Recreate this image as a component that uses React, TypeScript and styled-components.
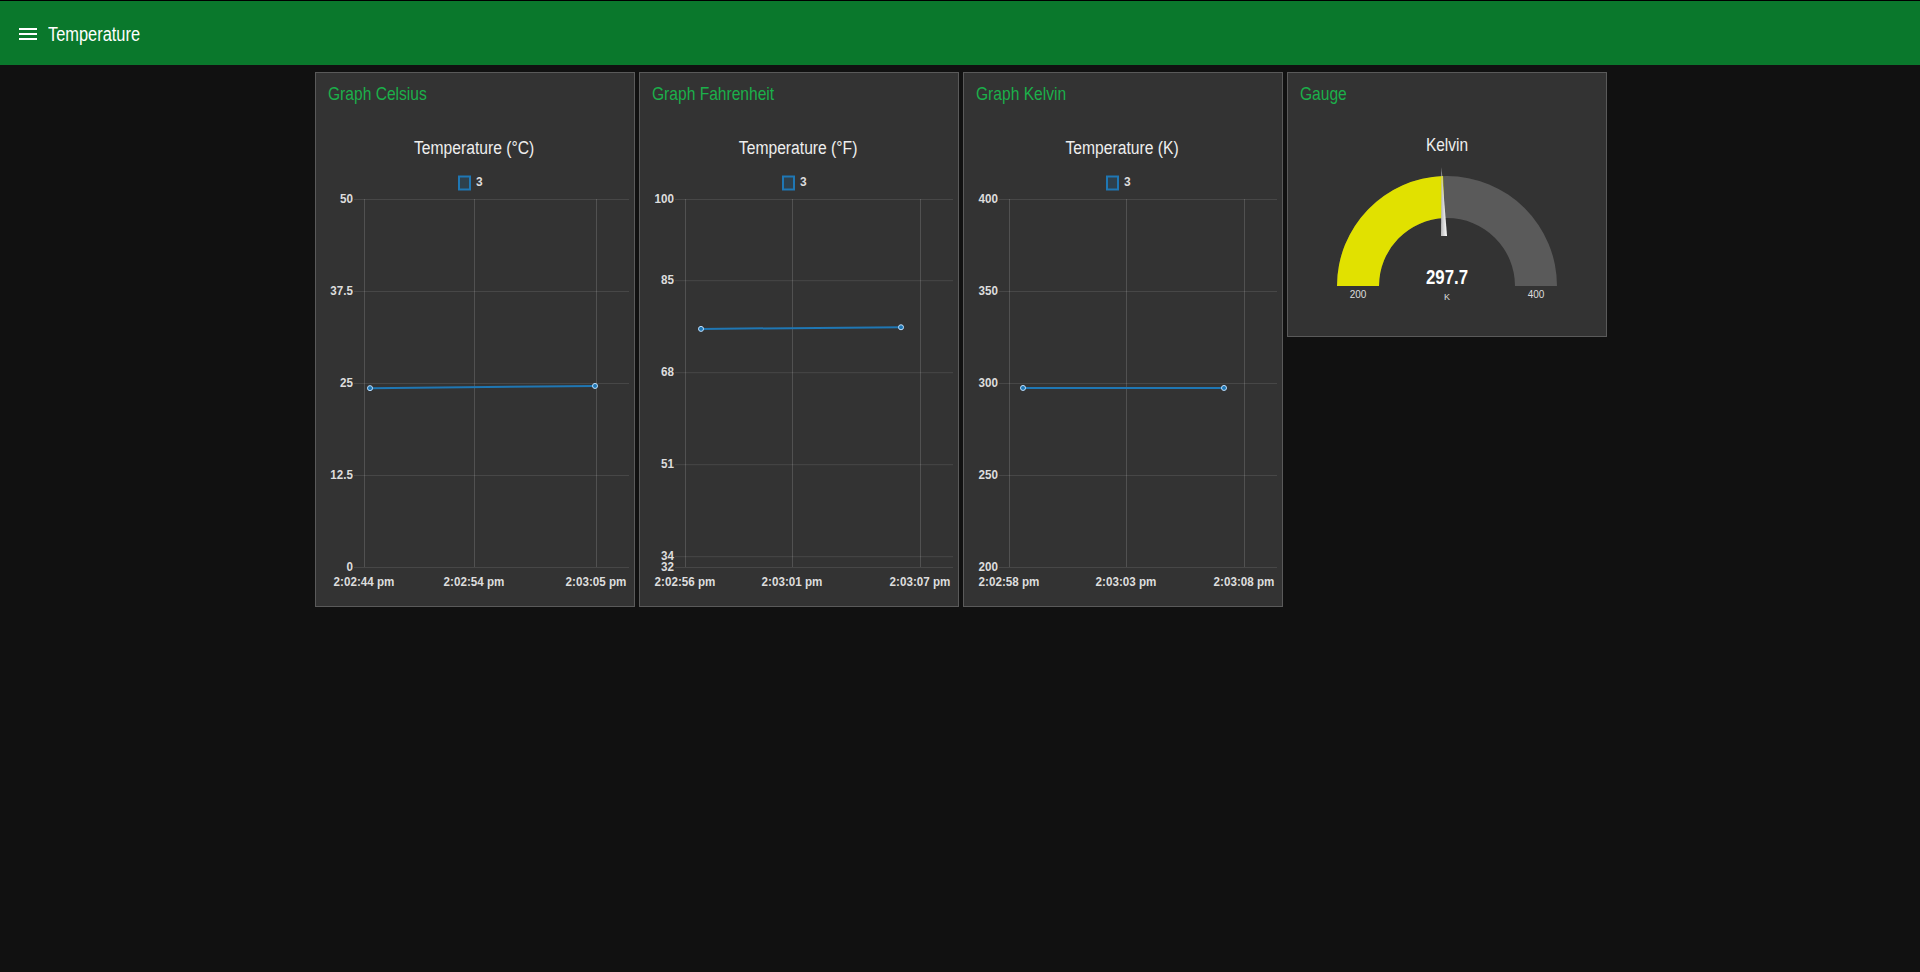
import React from 'react'
import styled, { createGlobalStyle } from 'styled-components'

const FONT = `"Liberation Sans", Arial, sans-serif`

const GlobalStyle = createGlobalStyle`
  html, body {
    margin: 0;
    padding: 0;
    background: #111111;
    font-family: ${FONT};
  }
`

const Page = styled.div`
  min-height: 972px;
  background: #111111;
`

const Header = styled.header`
  height: 62px;
  border-top: 1px solid #000;
  background: #0a782c;
  display: flex;
  align-items: center;
  padding: 2px 0 0 16px;
  gap: 8px;
  color: #fff;
`

const HeaderTitle = styled.h1`
  margin: 0;
  font-size: 20px;
  font-weight: 400;
  line-height: 24px;
`

// the dashboard font is a narrow grotesque; squeeze Liberation Sans to its width
const Squeeze = styled.span<{ $sx: number; $origin?: string }>`
  display: inline-block;
  white-space: nowrap;
  transform: scaleX(${(p) => p.$sx});
  transform-origin: ${(p) => p.$origin || 'left'} center;
`

const Board = styled.main`
  display: flex;
  justify-content: center;
  align-items: flex-start;
  gap: 4px;
  padding: 7px 0 0 1px;
`

const Card = styled.section<{ $pad: number }>`
  width: 320px;
  box-sizing: border-box;
  background: #333333;
  border: 1px solid #5a5a5a;
  display: flex;
  flex-direction: column;
  padding-bottom: ${(p) => p.$pad}px;
`

const CardTitle = styled.p`
  margin: 0;
  height: 40px;
  box-sizing: border-box;
  padding: 2px 12px 0;
  line-height: 38px;
  font-size: 19px;
  color: #1bb04a;
`

const ChartLabel = styled.div`
  height: 52px;
  box-sizing: border-box;
  padding-top: 19px;
  line-height: 33px;
  font-size: 18px;
  text-align: center;
  color: #eeeeee;
`

const ChartSvg = styled.svg`
  display: block;
  width: 318px;
  height: 430px;
  font-family: ${FONT};
`

const GaugeSvg = styled.svg`
  display: block;
  width: 318px;
  height: 210px;
  font-family: ${FONT};
`

const MenuIcon = () => (
  <svg width="24" height="24" viewBox="0 0 24 24" fill="#fff">
    <path d="M3 18h18v-2H3v2zm0-5h18v-2H3v2zm0-7v2h18V6H3z" />
  </svg>
)

type STextProps = {
  x: number
  y: number
  sx?: number
  size: number
  bold?: boolean
  fill?: string
  anchor?: 'start' | 'middle' | 'end'
  children: React.ReactNode
}

// svg text squeezed horizontally around its anchor point
const SText = ({ x, y, sx = 1, size, bold, fill = '#dddddd', anchor = 'start', children }: STextProps) => (
  <text
    x={x}
    y={y}
    fontSize={size}
    fontWeight={bold ? 700 : 400}
    fill={fill}
    textAnchor={anchor}
    transform={sx === 1 ? undefined : `matrix(${sx} 0 0 1 ${x * (1 - sx)} 0)`}
  >
    {children}
  </text>
)

const TOP = 34
const BOTTOM = 402
const RIGHT = 313
const BLUE = '#1f77b4'

type Tick = { v: number; label: string }
type ChartProps = {
  gridLeft: number
  yMin: number
  yMax: number
  yTicks: Tick[]
  xTicks: { x: number; label: string }[]
  points: [number, number][]
}

const LineChart = ({ gridLeft, yMin, yMax, yTicks, xTicks, points }: ChartProps) => {
  const yOf = (v: number) => BOTTOM - ((v - yMin) / (yMax - yMin)) * (BOTTOM - TOP)
  const line = points.map(([x, v]) => `${x},${yOf(v)}`).join(' ')
  return (
    <ChartSvg viewBox="0 0 318 430">
      <rect x="143" y="11.5" width="11" height="13" fill="rgba(31,119,180,0.2)" stroke={BLUE} strokeWidth="2" />
      <SText x={160} y={21} size={12} bold>3</SText>

      {yTicks.map((t) => (
        <g key={t.label}>
          <line x1={gridLeft - 10} x2={RIGHT} y1={yOf(t.v) + 0.5} y2={yOf(t.v) + 0.5} stroke="rgba(255,255,255,0.1)" />
          <SText x={gridLeft - 11} y={yOf(t.v) + 4} size={12} sx={0.97} bold anchor="end">
            {t.label}
          </SText>
        </g>
      ))}
      {xTicks.map((t) => (
        <g key={t.label}>
          <line x1={t.x + 0.5} x2={t.x + 0.5} y1={TOP} y2={BOTTOM} stroke="rgba(255,255,255,0.15)" />
          <SText x={t.x} y={421} size={12} sx={0.97} bold anchor="middle">
            {t.label}
          </SText>
        </g>
      ))}

      <polyline points={line} fill="none" stroke={BLUE} strokeWidth="2" />
      {points.map(([x, v]) => (
        <circle key={x} cx={x} cy={yOf(v)} r="2.5" fill={BLUE} stroke="#bfe0ff" strokeWidth="1" />
      ))}
    </ChartSvg>
  )
}

const Gauge = ({ value, min, max }: { value: number; min: number; max: number }) => {
  const cx = 159
  const cy = 173
  const R = 110
  const r = 68
  const a = Math.PI * ((value - min) / (max - min))
  const ox = cx - R * Math.cos(a)
  const oy = cy - R * Math.sin(a)
  const ix = cx - r * Math.cos(a)
  const iy = cy - r * Math.sin(a)
  return (
    <GaugeSvg viewBox="0 0 318 210">
      <defs>
        <linearGradient id="needle" x1="0" x2="1" y1="0" y2="0">
          <stop offset="0" stopColor="#b8b8b8" />
          <stop offset="1" stopColor="#ffffff" />
        </linearGradient>
      </defs>
      <SText x={cx} y={38} size={18} sx={0.86} fill="#eeeeee" anchor="middle">Kelvin</SText>
      <path
        d={`M ${cx - R} ${cy} A ${R} ${R} 0 0 1 ${cx + R} ${cy} L ${cx + r} ${cy} A ${r} ${r} 0 0 0 ${cx - r} ${cy} Z`}
        fill="#5a5a5a"
      />
      <path
        d={`M ${cx - R} ${cy} A ${R} ${R} 0 0 1 ${ox} ${oy} L ${ix} ${iy} A ${r} ${r} 0 0 0 ${cx - r} ${cy} Z`}
        fill="#e1e100"
      />
      <polygon points="153.5,54 153,123 159,123" fill="url(#needle)" />
      <SText x={cx} y={171} size={21} sx={0.8} bold fill="#ffffff" anchor="middle">
        {value.toFixed(1)}
      </SText>
      <SText x={cx} y={187} size={9} anchor="middle">K</SText>
      <SText x={cx - 89} y={185} size={10} anchor="middle">{min}</SText>
      <SText x={cx + 89} y={185} size={10} anchor="middle">{max}</SText>
    </GaugeSvg>
  )
}

const charts: { title: string; label: string; chart: ChartProps }[] = [
  {
    title: 'Graph Celsius',
    label: 'Temperature (°C)',
    chart: {
      gridLeft: 48,
      yMin: 0,
      yMax: 50,
      yTicks: [
        { v: 50, label: '50' },
        { v: 37.5, label: '37.5' },
        { v: 25, label: '25' },
        { v: 12.5, label: '12.5' },
        { v: 0, label: '0' },
      ],
      xTicks: [
        { x: 48, label: '2:02:44 pm' },
        { x: 158, label: '2:02:54 pm' },
        { x: 280, label: '2:03:05 pm' },
      ],
      points: [
        [54, 24.3],
        [279, 24.6],
      ],
    },
  },
  {
    title: 'Graph Fahrenheit',
    label: 'Temperature (°F)',
    chart: {
      gridLeft: 45,
      yMin: 32,
      yMax: 100,
      yTicks: [
        { v: 100, label: '100' },
        { v: 85, label: '85' },
        { v: 68, label: '68' },
        { v: 51, label: '51' },
        { v: 34, label: '34' },
        { v: 32, label: '32' },
      ],
      xTicks: [
        { x: 45, label: '2:02:56 pm' },
        { x: 152, label: '2:03:01 pm' },
        { x: 280, label: '2:03:07 pm' },
      ],
      points: [
        [61, 76.0],
        [261, 76.3],
      ],
    },
  },
  {
    title: 'Graph Kelvin',
    label: 'Temperature (K)',
    chart: {
      gridLeft: 45,
      yMin: 200,
      yMax: 400,
      yTicks: [
        { v: 400, label: '400' },
        { v: 350, label: '350' },
        { v: 300, label: '300' },
        { v: 250, label: '250' },
        { v: 200, label: '200' },
      ],
      xTicks: [
        { x: 45, label: '2:02:58 pm' },
        { x: 162, label: '2:03:03 pm' },
        { x: 280, label: '2:03:08 pm' },
      ],
      points: [
        [59, 297.3],
        [260, 297.3],
      ],
    },
  },
]

const App = () => (
  <Page>
    <GlobalStyle />
    <Header>
      <MenuIcon />
      <HeaderTitle>
        <Squeeze $sx={0.82}>Temperature</Squeeze>
      </HeaderTitle>
    </Header>
    <Board>
      {charts.map((c) => (
        <Card key={c.title} $pad={11}>
          <CardTitle>
            <Squeeze $sx={0.82}>{c.title}</Squeeze>
          </CardTitle>
          <ChartLabel>
            <Squeeze $sx={0.87} $origin="center">{c.label}</Squeeze>
          </ChartLabel>
          <LineChart {...c.chart} />
        </Card>
      ))}
      <Card $pad={13}>
        <CardTitle>
          <Squeeze $sx={0.82}>Gauge</Squeeze>
        </CardTitle>
        <Gauge value={297.7} min={200} max={400} />
      </Card>
    </Board>
  </Page>
)

export default App
